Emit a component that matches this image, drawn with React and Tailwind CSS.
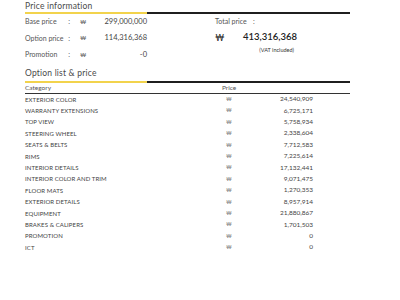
const options = [
  ["EXTERIOR COLOR", "24,540,909"],
  ["WARRANTY EXTENSIONS", "6,725,171"],
  ["TOP VIEW", "5,758,934"],
  ["STEERING WHEEL", "2,338,604"],
  ["SEATS & BELTS", "7,712,583"],
  ["RIMS", "7,225,614"],
  ["INTERIOR DETAILS", "17,132,441"],
  ["INTERIOR COLOR AND TRIM", "9,071,475"],
  ["FLOOR MATS", "1,270,353"],
  ["EXTERIOR DETAILS", "8,957,914"],
  ["EQUIPMENT", "21,880,867"],
  ["BRAKES & CALIPERS", "1,701,503"],
  ["PROMOTION", "0"],
  ["ICT", "0"],
];

const priceRows = [
  ["Base price", "299,000,000"],
  ["Option price", "114,316,368"],
  ["Promotion", "-0"],
];

function SectionBar() {
  return (
    <div className="flex h-[2px]">
      <div className="w-[122px] bg-[#f2d34c]" />
      <div className="flex-1 bg-[#1f1f1f]" />
    </div>
  );
}

export default function App() {
  return (
    <div
      className="w-[400px] h-[300px] bg-white text-[#444]"
      style={{ fontFamily: "Lato, 'DejaVu Sans', sans-serif" }}
    >
      <div className="pl-[25px] w-[350px] pt-[1px]">
        {/* price information */}
        <div className="h-[10px] flex items-center text-[8.5px] text-[#4a4a4a] tracking-[0.2px]">
          Price information
        </div>
        <div className="mt-[1px]">
          <SectionBar />
        </div>
        <div className="flex mt-[-1px]">
          <div className="w-[122px]">
            {priceRows.map(([label, value]) => (
              <div key={label} className="h-[16.5px] flex items-center">
                <span className="w-[41px] text-[7px] text-[#555]">{label}</span>
                <span className="w-[6px] text-center text-[7px] text-[#555]">:</span>
                <span className="ml-[8px] text-[6px] text-[#666]">₩</span>
                <span className="flex-1 text-right text-[7.5px] text-[#444]">{value}</span>
              </div>
            ))}
          </div>
          <div className="ml-[68px] w-[80px]">
            <div className="h-[16.5px] flex items-center text-[7px] text-[#555]">
              <span className="w-[38px]">Total price</span>
              <span>:</span>
            </div>
            <div className="h-[14px] flex items-center mt-[1px]">
              <span className="w-[28px] text-[9px] text-[#222]">₩</span>
              <span className="w-[51px] text-right text-[9.5px] font-semibold text-[#222]">
                413,316,368
              </span>
            </div>
            <div className="w-[79px] text-right text-[5.5px] text-[#333] mt-[1px]">
              (VAT included)
            </div>
          </div>
        </div>

        {/* option list */}
        <div className="h-[10px] flex items-center text-[8.5px] text-[#4a4a4a] tracking-[0.2px] mt-[6px]">
          Option list &amp; price
        </div>
        <div className="mt-[2px]">
          <SectionBar />
        </div>
        <div className="h-[11px] flex items-center border-b border-[#333] text-[6.5px] text-[#555]">
          <span className="w-[197px]">Category</span>
          <span>Price</span>
        </div>
        {options.map(([name, value]) => (
          <div key={name} className="h-[11.4px] flex items-center text-[6px] text-[#444]">
            <span className="w-[197px] tracking-[0.1px]">{name}</span>
            <span className="w-[14px] text-center text-[5.5px] text-[#888]">₩</span>
            <span className="w-[77px] text-right text-[6.5px]">{value}</span>
          </div>
        ))}
      </div>
    </div>
  );
}
